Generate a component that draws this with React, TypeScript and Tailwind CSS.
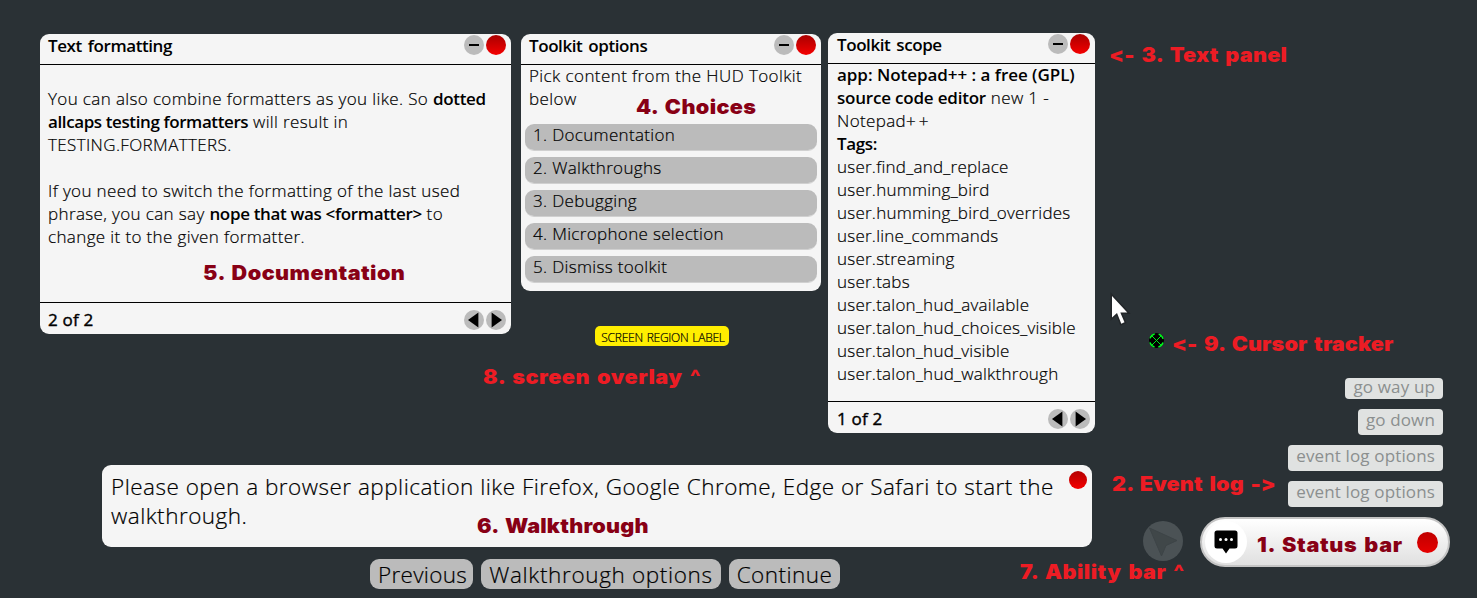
import type { ReactNode } from "react";

const tags = [
  "user.find_and_replace",
  "user.humming_bird",
  "user.humming_bird_overrides",
  "user.line_commands",
  "user.streaming",
  "user.tabs",
  "user.talon_hud_available",
  "user.talon_hud_choices_visible",
  "user.talon_hud_visible",
  "user.talon_hud_walkthrough",
];

const choices = ["Documentation", "Walkthroughs", "Debugging", "Microphone selection", "Dismiss toolkit"];

function Bold({ children, className = "tracking-[-0.34px]" }: { children: ReactNode; className?: string }) {
  return <b className={`font-semibold [-webkit-text-stroke:0] ${className}`}>{children}</b>;
}

function CloseDot() {
  return <span className="size-5 rounded-full bg-linear-to-b from-[#aa0000] to-[#f50000]" />;
}

function PageArrow({ flip = false }: { flip?: boolean }) {
  return (
    <svg viewBox="0 0 20 20" className={`size-5 ${flip ? "-scale-x-100" : ""}`}>
      <circle cx="10" cy="10" r="10" fill="#bbbbbb" />
      <path d="M5.6 2.600v14.800L16 10z" fill="#000" />
    </svg>
  );
}

type PanelProps = { title: string; page?: string; className: string; inset?: string; children: ReactNode };

function Panel({ title, page, className, inset = "pl-2", children }: PanelProps) {
  return (
    <section className={`absolute flex flex-col overflow-hidden rounded-[9px] bg-[#f5f5f5] ${className}`}>
      <header className={`flex h-[31px] shrink-0 justify-between border-b border-black pr-[5px] ${inset}`}>
        <h2 className="font-semibold tracking-[-0.42px] [-webkit-text-stroke:0] [word-spacing:2px]">{title}</h2>
        <div className="flex gap-0.5 pt-px">
          <span className="flex size-5 items-center justify-center rounded-full bg-[#bbbbbb]">
            <span className="h-0.5 w-2.5 bg-black" />
          </span>
          <CloseDot />
        </div>
      </header>
      <div className="-mt-px grow">{children}</div>
      {page && (
        <footer className={`flex h-8 shrink-0 justify-between border-t border-black pt-[5px] pr-[5px] ${inset}`}>
          <span className="font-normal tracking-[0.2px] [-webkit-text-stroke:0.4px]">{page}</span>
          <div className="flex gap-0.5 pt-0.5">
            <PageArrow flip />
            <PageArrow />
          </div>
        </footer>
      )}
    </section>
  );
}

function Label({ className, children }: { className: string; children: ReactNode }) {
  return (
    <span
      className={`absolute origin-left scale-x-[1.08] font-['Inter',sans-serif] text-[20px] leading-6 font-black whitespace-nowrap [-webkit-text-stroke:0] [font-feature-settings:'calt'_0] [word-spacing:2px] ${className}`}
    >
      {children}
    </span>
  );
}

function LogEntry({ className, children }: { className: string; children: ReactNode }) {
  return (
    <li className={`rounded-[4px] bg-[#e0e2e1] px-2 font-normal tracking-[0.14px] text-[#8b8f8f] [-webkit-text-stroke:0] ${className}`}>
      {children}
    </li>
  );
}

function StepButton({ className, children }: { className: string; children: ReactNode }) {
  return (
    <button className={`h-[30px] rounded-[9px] bg-[#bbbbbb] text-center leading-[31px] whitespace-nowrap ${className}`}>
      {children}
    </button>
  );
}

export default function App() {
  return (
    <main className="relative h-[598px] w-[1477px] overflow-hidden bg-[#2a3135] font-['Open_Sans',sans-serif] text-[17px] leading-[23px] font-light tracking-[0.37px] text-black [-webkit-text-stroke:0.2px]">
      <Panel title="Text formatting" page="2 of 2" className="top-[34px] left-[40px] h-[300px] w-[471px]">
        <div className="px-2 pt-[23px] whitespace-nowrap">
          <p>
            You can also combine formatters as you like. So <Bold>dotted</Bold>
            <br />
            <Bold className="tracking-[-0.4px]">allcaps testing formatters</Bold> will result in
            <br />
            TESTING.FORMATTERS.
          </p>
          <p className="pt-[23px]">
            If you need to switch the formatting of the last used
            <br />
            phrase, you can say <Bold>nope that was &lt;formatter&gt;</Bold> to
            <br />
            change it to the given formatter.
          </p>
        </div>
      </Panel>

      <Panel title="Toolkit options" className="top-[34px] left-[521px] h-[257px] w-[300px]">
        <p className="px-2 tracking-[0.41px] whitespace-nowrap">
          Pick content from the HUD Toolkit
          <br />
          below
        </p>
        <ol className="flex flex-col gap-[6px] px-1 pt-[14px] tracking-[0.33px]">
          {choices.map((c, i) => (
            <li key={c} className="h-[27px] rounded-[9px] border-b border-[#d0d0d0] bg-[#bbbbbb] bg-clip-padding pl-2">
              <span className="relative -top-px">
                {i + 1}. {c}
              </span>
            </li>
          ))}
        </ol>
      </Panel>

      <Panel title="Toolkit scope" page="1 of 2" inset="pl-[9px]" className="top-[33px] left-[828px] h-[400px] w-[267px]">
        <div className="pl-[9px] whitespace-nowrap">
          <p>
            <Bold className="tracking-[-0.04px]">app: Notepad++ : a free (GPL)</Bold>
            <br />
            <Bold className="tracking-[-0.2px]">source code editor</Bold> new 1 -
            <br />
            Notepad<span className="tracking-[3px]">++</span>
            <br />
            <Bold>Tags:</Bold>
          </p>
          <ul className="tracking-[0.24px]">
            {tags.map((t) => (
              <li key={t}>{t}</li>
            ))}
          </ul>
        </div>
      </Panel>

      <div className="absolute top-[326px] left-[595px] flex h-5 w-[134px] justify-center rounded-[5px] bg-[#ffee00] pl-0.5 text-[12px] leading-[23px] tracking-[-0.25px] whitespace-nowrap [word-spacing:1px]">
        SCREEN REGION LABEL
      </div>

      <section className="absolute top-[465px] left-[102px] flex h-[82px] w-[990px] justify-between rounded-[9px] bg-[#f5f5f5] pt-[7px] pr-[5px] pl-[9px] text-[22.5px] leading-[29px] tracking-[0.49px]">
        <p className="whitespace-nowrap">
          Please open a browser application like Firefox, Google Chrome, Edge or Safari to start the
          <br />
          walkthrough.
        </p>
        <span className="-mt-px size-[18px] shrink-0 rounded-full bg-linear-to-b from-[#b40000] to-[#f50000]" />
      </section>
      <nav className="absolute top-[559px] left-[370px] flex gap-2 text-[22.5px] tracking-[0.3px]">
        <StepButton className="w-[103px] pl-0.5">Previous</StepButton>
        <StepButton className="w-[240px] tracking-[0.65px]">Walkthrough options</StepButton>
        <StepButton className="w-[111px] tracking-[0.45px]">Continue</StepButton>
      </nav>

      <ul className="absolute top-[378px] right-[34px] flex flex-col items-end gap-2.5 whitespace-nowrap">
        <LogEntry className="h-[21px] leading-[18px]">go way up</LogEntry>
        <LogEntry className="h-[26px] leading-[22px]">go down</LogEntry>
        <LogEntry className="h-[26px] leading-[22px]">event log options</LogEntry>
        <LogEntry className="h-[26px] leading-[22px]">event log options</LogEntry>
      </ul>

      <svg viewBox="0 0 40 40" className="absolute top-[521px] left-[1143px] size-10">
        <circle cx="20" cy="20" r="20" fill="#4b5255" />
        <path d="M6.500 7 34 19.500 23 24.500 18.500 35z" fill="#404749" stroke="#3d4447" />
      </svg>

      <section className="absolute top-[517px] left-[1200px] flex h-[50px] w-[250px] items-center justify-between rounded-full border-2 border-[#c4c4c4] bg-linear-to-b from-white to-[#e0e0e0] pr-[10px] pl-[3px]">
        <span className="flex size-[42px] items-center justify-center rounded-full bg-white">
          <svg viewBox="0 0 24 24" className="size-6">
            <path
              d="M3 .5h18a2.500 2.500 0 0 1 2.500 2.500v13a2.500 2.500 0 0 1-2.500 2.500h-5.500L12 23.500 8.500 18.500H3A2.500 2.500 0 0 1 .5 16V3A2.500 2.500 0 0 1 3 .5z"
              fill="#000"
            />
            <g fill="#fff">
              <circle cx="6.500" cy="9.500" r="1.500" />
              <circle cx="12" cy="9.500" r="1.500" />
              <circle cx="17.500" cy="9.500" r="1.500" />
            </g>
          </svg>
        </span>
        <span className="size-[21px] rounded-full bg-linear-to-b from-[#c00000] to-[#e60000]" />
      </section>

      <svg viewBox="0 0 24 38" className="absolute top-[292px] left-[1109px] h-[38px] w-6">
        <path
          d="M3 4v21.500l5-4.500 4.300 10.700 3.200-1.400-4.200-9.800h7z"
          fill="#fff"
          stroke="#222629"
          strokeWidth="3"
          paintOrder="stroke"
        />
      </svg>
      <svg viewBox="0 0 16 16" className="absolute top-[333px] left-[1148px] size-4">
        <circle cx="8.500" cy="7.500" r="7.500" fill="#000" />
        <circle
          cx="8.500"
          cy="7.500"
          r="6.800"
          fill="none"
          stroke="#00ff1e"
          strokeWidth="1.400"
          strokeDasharray="6.680 4"
          strokeDashoffset="-2"
        />
        <path d="M4 3l9 9M13 3l-9 9" stroke="#00e81c" />
      </svg>

      <Label className="top-[43px] left-[1109px] tracking-[0.25px] text-[#ed1c24]">&lt;- 3. Text panel</Label>
      <Label className="top-[95px] left-[636px] tracking-[0.35px] text-[#880015]">4. Choices</Label>
      <Label className="top-[261px] left-[203px] tracking-[0.42px] text-[#880015]">5. Documentation</Label>
      <Label className="top-[365px] left-[483px] tracking-[0.5px] text-[#ed1c24]">8. screen overlay ^</Label>
      <Label className="top-[332px] left-[1172px] tracking-[0.12px] text-[#ed1c24]">&lt;- 9. Cursor tracker</Label>
      <Label className="top-[472px] left-[1112px] tracking-[0.15px] text-[#ed1c24]">2. Event log -&gt;</Label>
      <Label className="top-[514px] left-[477px] tracking-[0.2px] text-[#880015]">6. Walkthrough</Label>
      <Label className="top-[560px] left-[1020px] tracking-[0.45px] text-[#ed1c24]">7. Ability bar ^</Label>
      <Label className="top-[533px] left-[1257px] tracking-[0.6px] text-[#880015]">1. Status bar</Label>
    </main>
  );
}
